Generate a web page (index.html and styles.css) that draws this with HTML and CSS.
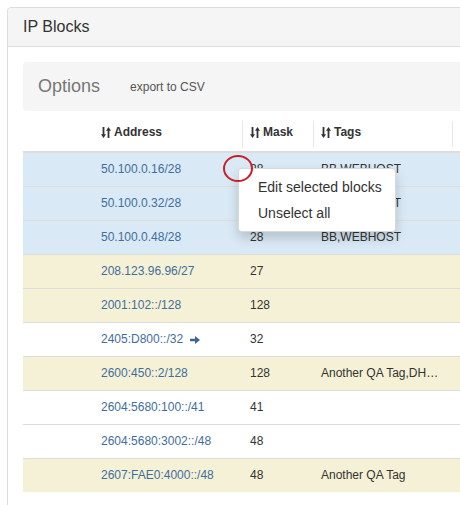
FILE: index.html
```html
<!DOCTYPE html>
<html>
<head>
<meta charset="utf-8">
<link rel="stylesheet" href="styles.css">
</head>
<body>
<div class="panel">
  <div class="panel-heading">IP Blocks</div>
  <div class="panel-body">
    <div class="well">
      <span class="well-title">Options</span>
      <span class="well-link">export to CSV</span>
    </div>
    <table class="blocks">
      <colgroup>
        <col class="c-check"><col class="c-addr"><col class="c-mask"><col class="c-tags"><col class="c-rest">
      </colgroup>
      <thead>
        <tr>
          <th></th>
          <th><span class="sort"><svg width="10" height="11" viewBox="0 0 10 11"><path d="M1.6 0h1.8v7.2h1.6L2.5 11 0 7.2h1.6z M6.6 11h1.8V3.8H10L7.5 0 5 3.8h1.6z" fill="#333"/></svg>Address</span></th>
          <th class="sep"><span class="sort"><svg width="10" height="11" viewBox="0 0 10 11"><path d="M1.6 0h1.8v7.2h1.6L2.5 11 0 7.2h1.6z M6.6 11h1.8V3.8H10L7.5 0 5 3.8h1.6z" fill="#333"/></svg>Mask</span></th>
          <th class="sep"><span class="sort"><svg width="10" height="11" viewBox="0 0 10 11"><path d="M1.6 0h1.8v7.2h1.6L2.5 11 0 7.2h1.6z M6.6 11h1.8V3.8H10L7.5 0 5 3.8h1.6z" fill="#333"/></svg>Tags</span></th>
          <th class="sep"></th>
        </tr>
      </thead>
      <tbody>
        <tr class="info"><td></td><td><a>50.100.0.16/28</a></td><td>28</td><td>BB,WEBHOST</td><td></td></tr>
        <tr class="info"><td></td><td><a>50.100.0.32/28</a></td><td>28</td><td>BB,WEBHOST</td><td></td></tr>
        <tr class="info"><td></td><td><a>50.100.0.48/28</a></td><td>28</td><td>BB,WEBHOST</td><td></td></tr>
        <tr class="warn"><td></td><td><a>208.123.96.96/27</a></td><td>27</td><td></td><td></td></tr>
        <tr class="warn"><td></td><td><a>2001:102::/128</a></td><td>128</td><td></td><td></td></tr>
        <tr><td></td><td><a>2405:D800::/32</a><svg class="arrow" width="10" height="8" viewBox="0 0 10 8"><path d="M0 2.7h5V0l5 4-5 4V5.3H0z" fill="#3d6591"/></svg></td><td>32</td><td></td><td></td></tr>
        <tr class="warn"><td></td><td><a>2600:450::2/128</a></td><td>128</td><td>Another QA Tag,DH…</td><td></td></tr>
        <tr><td></td><td><a>2604:5680:100::/41</a></td><td>41</td><td></td><td></td></tr>
        <tr><td></td><td><a>2604:5680:3002::/48</a></td><td>48</td><td></td><td></td></tr>
        <tr class="warn"><td></td><td><a>2607:FAE0:4000::/48</a></td><td>48</td><td>Another QA Tag</td><td></td></tr>
      </tbody>
    </table>
  </div>
</div>
<ul class="menu">
  <li>Edit selected blocks</li>
  <li>Unselect all</li>
</ul>
<div class="marker"></div>
</body>
</html>
```
FILE: styles.css
```css
html, body {
  overflow: hidden;
}
body {
  margin: 7px;
  position: relative;
  width: 620px;
  font-family: "Liberation Sans", Arial, sans-serif;
  font-size: 12px;
  color: #333;
  background: #fff;
}
.panel {
  border: 1px solid #ddd;
  border-radius: 4px;
  background: #fff;
  min-height: 520px;
}
.panel-heading {
  background: #f5f5f5;
  border-bottom: 1px solid #ddd;
  padding: 10px 15px;
  height: 18px;
  line-height: 18px;
  font-size: 16px;
  color: #333;
  border-radius: 3px 3px 0 0;
}
.panel-body {
  padding: 15px;
}
.well {
  display: flex;
  align-items: center;
  gap: 30px;
  height: 49px;
  padding: 0 15px;
  background: #f5f5f5;
  border-radius: 4px;
  margin-bottom: 5px;
}
.well-title {
  font-size: 18px;
  color: #777;
}
.well-link {
  font-size: 12px;
  color: #555;
  padding-top: 1px;
}
.blocks {
  border-collapse: collapse;
  table-layout: fixed;
  width: 560px;
}
.c-check { width: 70px; }
.c-addr { width: 149px; }
.c-mask { width: 71px; }
.c-tags { width: 139px; }
.c-rest { width: 131px; }
.blocks th, .blocks td {
  padding: 8px;
  line-height: 17px;
  text-align: left;
  white-space: nowrap;
  overflow: hidden;
}
.blocks th {
  font-weight: bold;
  border-bottom: 2px solid #ddd;
  position: relative;
}
.blocks th.sep::before {
  content: "";
  position: absolute;
  left: 0;
  top: 5px;
  bottom: 4px;
  width: 1px;
  background: #e8e8e8;
}
.sort {
  display: inline-flex;
  align-items: center;
  gap: 3px;
}
.blocks td {
  border-top: 1px solid #ddd;
}
.blocks tbody tr:first-child td {
  border-top: 0;
}
.blocks tr.info td {
  background: #d9eaf6;
}
.blocks tr.warn td {
  background: #f5f1d6;
}
.blocks a {
  color: #3f6e9c;
}
.arrow {
  margin-left: 7px;
  vertical-align: -1px;
}
.menu {
  position: absolute;
  left: 231px;
  top: 161px;
  width: 156px;
  margin: 0;
  padding: 5px 0;
  list-style: none;
  background: #fff;
  border: 1px solid rgba(0, 0, 0, 0.15);
  border-radius: 4px;
  box-shadow: 0 6px 12px rgba(0, 0, 0, 0.175);
}
.menu li {
  padding: 0 0 0 19px;
  height: 26px;
  line-height: 26px;
  font-size: 14px;
  color: #333;
  white-space: nowrap;
}
.marker {
  position: absolute;
  left: 216px;
  top: 148px;
  width: 26px;
  height: 23px;
  border: 2.5px solid #c8202a;
  border-radius: 50%;
}
```
